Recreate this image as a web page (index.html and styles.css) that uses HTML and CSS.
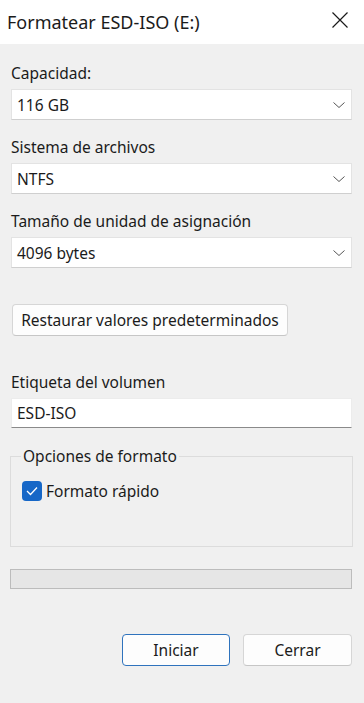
FILE: index.html
```html
<!DOCTYPE html>
<html lang="es">
<head>
  <meta charset="UTF-8">
  <meta name="viewport" content="width=device-width, initial-scale=1.0">
  <title>Formatear ESD-ISO (E:)</title>
  <link rel="stylesheet" href="styles.css">
</head>
<body>
  <div class="titlebar">
    <div class="title">Formatear ESD-ISO (E:)</div>
    <div class="close">
      <svg width="16" height="16" viewBox="0 0 16 16">
        <path d="M0.5 0.5 L15.5 15.5 M15.5 0.5 L0.5 15.5" stroke="#1a1a1a" stroke-width="1.2" fill="none"/>
      </svg>
    </div>
  </div>

  <div class="content">
    <div class="field first">
      <div class="label">Capacidad:</div>
      <div class="select">
        <span>116 GB</span>
        <svg class="chevron" width="12" height="6" viewBox="0 0 12 6">
          <polyline points="0.5,0.5 6,5.5 11.5,0.5" fill="none" stroke="#555" stroke-width="1"/>
        </svg>
      </div>
    </div>

    <div class="field">
      <div class="label">Sistema de archivos</div>
      <div class="select">
        <span>NTFS</span>
        <svg class="chevron" width="12" height="6" viewBox="0 0 12 6">
          <polyline points="0.5,0.5 6,5.5 11.5,0.5" fill="none" stroke="#555" stroke-width="1"/>
        </svg>
      </div>
    </div>

    <div class="field">
      <div class="label">Tamaño de unidad de asignación</div>
      <div class="select">
        <span>4096 bytes</span>
        <svg class="chevron" width="12" height="6" viewBox="0 0 12 6">
          <polyline points="0.5,0.5 6,5.5 11.5,0.5" fill="none" stroke="#555" stroke-width="1"/>
        </svg>
      </div>
    </div>

    <button class="button restore">Restaurar valores predeterminados</button>

    <div class="field volume">
      <div class="label">Etiqueta del volumen</div>
      <div class="textbox">ESD-ISO</div>
    </div>

    <fieldset class="group">
      <legend>Opciones de formato</legend>
      <div class="check-row">
        <span class="checkbox">
          <svg width="12" height="10" viewBox="0 0 12 10">
            <polyline points="1,5 4.5,8.5 11,1.5" fill="none" stroke="#fff" stroke-width="1.3"/>
          </svg>
        </span>
        <span>Formato rápido</span>
      </div>
    </fieldset>

    <div class="progress"></div>

    <div class="actions">
      <button class="button primary">Iniciar</button>
      <button class="button">Cerrar</button>
    </div>
  </div>
</body>
</html>
```

FILE: styles.css
```css
body {
  margin: 0;
  padding: 0;
  font-family: "Noto Sans", "Open Sans", sans-serif;
  font-size: 15.5px;
  color: #1b1b1b;
  background: #f0f0f0;
  width: 364px;
  height: 703px;
  overflow: hidden;
}

.titlebar {
  height: 44px;
  background: #fff;
  display: flex;
  align-items: center;
  justify-content: space-between;
  padding: 0 16px 0 7px;
}

.title {
  font-size: 18px;
  color: #1b1b1b;
  margin-top: -1px;
}

.close {
  display: flex;
  margin-top: -4px;
}

.content {
  padding: 0 12px 0 11px;
}

.field {
  margin-top: 17px;
}

.field.first {
  margin-top: 19px;
}

.label {
  line-height: 20px;
  height: 20px;
  margin-bottom: 6px;
}

.select {
  box-sizing: border-box;
  height: 31px;
  background: #fff;
  border: 1px solid #e3e3e3;
  border-bottom-color: #cfcfcf;
  display: flex;
  align-items: center;
  justify-content: space-between;
  padding: 0 6px 0 5px;
}

.chevron {
  margin-top: 1px;
}

.button {
  font-family: inherit;
  font-size: 15.5px;
  color: #1b1b1b;
  background: #fdfdfd;
  border: 1px solid #d6d6d6;
  border-bottom-color: #c6c6c6;
  border-radius: 4px;
  height: 32px;
  padding: 0;
}

.restore {
  display: block;
  margin: 36px 0 0 1px;
  width: 276px;
}

.field.volume {
  margin-top: 36px;
}

.textbox {
  box-sizing: border-box;
  height: 30px;
  background: #fff;
  border: 1px solid #ececec;
  border-bottom: 1px solid #8a8a8a;
  display: flex;
  align-items: center;
  padding: 0 5px;
}

.group {
  margin: 18px -1px 0 -1px;
  padding: 14px 9px 0 10px;
  height: 101px;
  box-sizing: border-box;
  border: 1px solid #dcdcdc;
  border-radius: 0;
}

.group legend {
  padding: 0 2px;
  line-height: 20px;
}

.check-row {
  display: flex;
  align-items: center;
  gap: 4px;
  margin-left: 1px;
}

.checkbox {
  width: 20px;
  height: 20px;
  border-radius: 4px;
  background: #1667c7;
  display: flex;
  align-items: center;
  justify-content: center;
}

.progress {
  box-sizing: border-box;
  margin: 22px 0 0 -1px;
  height: 20px;
  background: #e6e6e6;
  border: 1px solid #bcbcbc;
}

.actions {
  display: flex;
  justify-content: flex-end;
  gap: 13px;
  margin-top: 45px;
}

.actions .button {
  width: 109px;
}

.actions .primary {
  width: 108px;
  border: 1px solid #2f73bd;
}
```
